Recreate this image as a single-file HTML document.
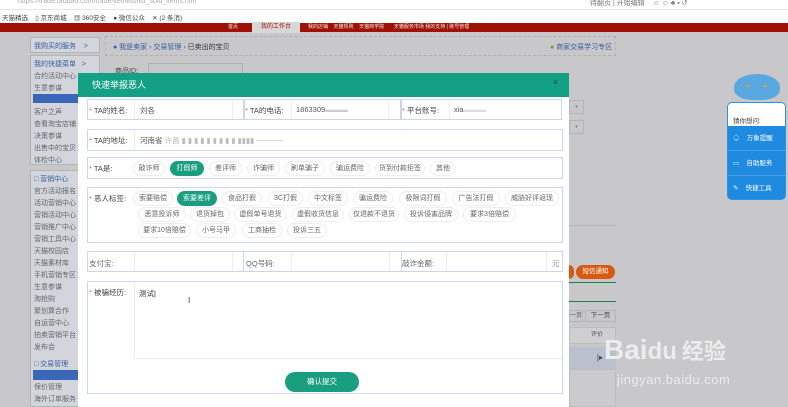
<!DOCTYPE html>
<html><head><meta charset="utf-8"><style>
*{margin:0;padding:0;box-sizing:border-box}
body{width:788px;height:407px;overflow:hidden;position:relative;background:#c8c8ca;font-family:"Liberation Sans","Noto Sans CJK SC",sans-serif;font-size:7px;color:#555}
.a{position:absolute}
.pill{position:absolute;height:15px;border:1px solid #eee;border-radius:8px;background:#fff;font-size:7px;color:#666;text-align:center;line-height:13px}
.pill.on{background:#1a9e80;color:#fff;border-color:#1a9e80}
.box{position:absolute;border:1px solid #c9d6ee;background:#fff}
.lbl{position:absolute;font-size:7.5px;color:#444}
.lbl b{color:#e55;font-weight:normal}
.sb{position:absolute;left:34px;font-size:7px;color:#666}
</style></head><body>
<div class="a" style="left:0;top:0;width:788px;height:23px;background:#fff"></div>
<div class="a" style="left:18px;top:-2px;font-size:7px;color:#aaa">https://trade.taobao.com/trade/itemlist/list_sold_items.htm</div>
<div class="a" style="left:0;top:9px;width:788px;height:1px;background:#e5e5e5"></div>
<div class="a" style="left:2px;top:12px;font-size:6.5px;color:#444">天猫精选 &nbsp;&nbsp; ▯ 京东商城 &nbsp;&nbsp; ▦ 360安全 &nbsp;&nbsp; ● 微信公众 &nbsp;&nbsp; ✕ (2 条消)</div>
<div class="a" style="left:590px;top:-2px;font-size:7px;color:#777">待翻页 | 开始编辑 &nbsp;&nbsp; ☺ ☺ ♣ ▪ ↺</div>
<div class="a" style="left:0;top:23px;width:788px;height:9px;background:#a11004"></div>
<div class="a" style="left:252px;top:22px;width:48px;height:11px;background:#d8d8d8;font-size:6px;text-align:center;line-height:11px;color:#a11004">我的工作台</div>
<div class="a" style="left:228px;top:23px;font-size:5px;color:#eee;line-height:9px">首页</div>
<div class="a" style="left:308px;top:23px;font-size:5px;color:#eee;line-height:9px">我的店铺 &nbsp;&nbsp; 天猫规则 &nbsp;&nbsp; 天猫商学院 &nbsp;&nbsp;&nbsp;&nbsp;&nbsp; 天猫服务市场   我的支持 | 账号管理</div>
<div class="a" style="left:30px;top:37px;width:70px;height:16px;background:#d2d5dc;border:1px solid #b5b5b5"></div>
<div class="sb" style="top:41px;color:#3a5ea0">我购买的服务 &nbsp;&nbsp; &gt;</div>
<div class="a" style="left:30px;top:55px;width:70px;height:110px;background:#d2d5dc;border:1px solid #b5b5b5"></div>
<div class="sb" style="top:59px;color:#3a5ea0">我的快捷菜单 &nbsp; &gt;</div>
<div class="sb" style="top:71px">合约活动中心</div>
<div class="sb" style="top:83px">生意参谋</div>
<div class="a" style="left:33px;top:94px;width:45px;height:9px;background:#3a68b8"></div>
<div class="sb" style="top:107px">客户之声</div>
<div class="sb" style="top:119px">查看淘宝店铺</div>
<div class="sb" style="top:131px">决策参谋</div>
<div class="sb" style="top:143px">出售中的宝贝</div>
<div class="sb" style="top:155px">体检中心</div>
<div class="a" style="left:30px;top:170px;width:70px;height:237px;background:#d2d5dc;border:1px solid #b5b5b5"></div>
<div class="sb" style="top:174px;color:#3a5ea0">□ 营销中心</div>
<div class="sb" style="top:186px">官方活动报名</div>
<div class="sb" style="top:198px">活动营销中心</div>
<div class="sb" style="top:210px">营销活动中心</div>
<div class="sb" style="top:222px">营销推广中心</div>
<div class="sb" style="top:234px">营销工具中心</div>
<div class="sb" style="top:246px">天猫校园店</div>
<div class="sb" style="top:258px">天猫素材库</div>
<div class="sb" style="top:270px">手机营销专区</div>
<div class="sb" style="top:282px">生意参谋</div>
<div class="sb" style="top:294px">淘抢购</div>
<div class="sb" style="top:306px">聚划算合作</div>
<div class="sb" style="top:318px">自运营中心</div>
<div class="sb" style="top:330px">拍卖营销平台</div>
<div class="sb" style="top:342px">发布会</div>
<div class="sb" style="top:359px;color:#3a5ea0">□ 交易管理</div>
<div class="a" style="left:33px;top:370px;width:45px;height:10px;background:#3a68b8"></div>
<div class="sb" style="top:382px">保价管理</div>
<div class="sb" style="top:394px">海外订单服务</div>
<div class="a" style="left:105px;top:36px;width:511px;height:20px;border:1px dashed #b0b0b0"></div>
<div class="a" style="left:113px;top:42px;font-size:7px;color:#3a5ea0">● 我是卖家 › 交易管理 › <span style="color:#333">已卖出的宝贝</span></div>
<div class="a" style="left:550px;top:42px;font-size:7px;color:#3a5ea0"><span style="color:#7a9a20">●</span> 商家交易学习专区</div>
<div class="a" style="left:115px;top:66px;font-size:7px;color:#444">商品ID:</div>
<div class="a" style="left:148px;top:63px;width:95px;height:12px;border:1px solid #b0b0b0"></div>
<div class="a" style="left:569px;top:100px;width:15px;height:14px;border:1px solid #b5b5b5;font-size:5px;color:#777;text-align:center;line-height:12px">▾</div>
<div class="a" style="left:569px;top:120px;width:15px;height:14px;border:1px solid #b5b5b5;font-size:5px;color:#777;text-align:center;line-height:12px">▾</div>
<div class="a" style="left:569px;top:225px;width:47px;height:1px;background:#b5b5b5"></div>
<div class="a" style="left:569px;top:265px;width:5px;height:14px;background:#d85a10;border-radius:0 7px 7px 0"></div>
<div class="a" style="left:576px;top:265px;width:39px;height:14px;background:#d85a10;border-radius:7px;color:#fff;font-size:6.5px;text-align:center;line-height:14px">短信通知</div>
<div class="a" style="left:569px;top:282px;width:47px;height:1px;background:#1a7a50"></div>
<div class="a" style="left:569px;top:301px;width:47px;height:1px;background:#1a7a50"></div>
<div class="a" style="left:569px;top:310px;width:14px;height:12px;border:1px solid #b5b5b5;font-size:6px;line-height:10px">一页</div>
<div class="a" style="left:585px;top:310px;width:31px;height:12px;border:1px solid #b5b5b5;font-size:6.5px;text-align:center;line-height:10px;color:#444">下一页</div>
<div class="a" style="left:569px;top:327px;width:47px;height:17px;background:#cfcfd1;border:1px solid #bdbdbd;font-size:6px;line-height:15px;text-align:right;padding-right:12px">评价</div>
<div class="a" style="left:569px;top:347px;width:47px;height:22px;background:#b8c1cd;font-size:8px;line-height:22px;text-align:right;padding-right:13px;color:#444">|▸</div>
<div class="a" style="left:569px;top:369px;width:47px;height:38px;background:#cbcbcd;border:1px solid #bdbdbd"></div>
<div class="a" style="left:734px;top:74px;width:46px;height:26px;background:#5aa8e0;border-radius:50% 50% 40% 40%"></div>
<div class="a" style="left:746px;top:85px;width:3px;height:2px;background:#e0a020"></div>
<div class="a" style="left:764px;top:85px;width:3px;height:2px;background:#e0a020"></div>
<div class="a" style="left:727px;top:102px;width:59px;height:98px;background:#1e8be0;border-radius:5px;border:1px solid #2d93e0"></div>
<div class="a" style="left:728px;top:103px;width:57px;height:23px;background:#fff;border-radius:4px 4px 0 0;font-size:6.5px;color:#444;padding:12px 0 0 5px">猜你想问:</div>
<div class="a" style="left:733px;top:132px;font-size:6.5px;color:#fff">♤ &nbsp;&nbsp; 万象提醒</div>
<div class="a" style="left:728px;top:150px;width:57px;height:1px;background:#4aa0e8"></div>
<div class="a" style="left:733px;top:157px;font-size:6.5px;color:#fff">▭ &nbsp;&nbsp; 自助服务</div>
<div class="a" style="left:728px;top:175px;width:57px;height:1px;background:#4aa0e8"></div>
<div class="a" style="left:733px;top:182px;font-size:6.5px;color:#fff">✎ &nbsp;&nbsp; 快捷工具</div>
<div class="a" style="left:604px;top:335px;font-size:28px;font-weight:bold;color:#ececec;line-height:30px;white-space:nowrap">Bai<span style="font-size:24px">du</span><span style="font-size:22px;font-family:'Noto Sans CJK SC',sans-serif"> 经验</span></div>
<div class="a" style="left:617px;top:372px;font-size:13px;color:#ececec;letter-spacing:0.5px">jingyan.baidu.com</div>
<div class="a" style="left:78px;top:73px;width:491px;height:334px;background:#fff"></div>
<div class="a" style="left:78px;top:73px;width:491px;height:24px;background:#14a085"></div>
<div class="a" style="left:92px;top:78px;font-size:9px;color:#fff">快速举报恶人</div>
<div class="a" style="left:553px;top:77px;font-size:9px;color:#1a4a40">×</div>
<div class="box" style="left:87px;top:99px;width:475px;height:21px"></div>
<div class="a" style="left:243px;top:100px;width:2px;height:19px;background:#c9d6ee"></div>
<div class="a" style="left:400px;top:100px;width:2px;height:19px;background:#c9d6ee"></div>
<div class="a" style="left:134px;top:100px;width:99px;height:19px;border-left:1px solid #eee;border-right:1px solid #eee"></div>
<div class="a" style="left:291px;top:100px;width:98px;height:19px;border-left:1px solid #eee;border-right:1px solid #eee"></div>
<div class="a" style="left:449px;top:100px;width:1px;height:19px;background:#eee"></div>
<div class="lbl" style="left:89px;top:105px"><b>*</b> TA的姓名:</div>
<div class="lbl" style="left:140px;top:105px;color:#555">刘各</div>
<div class="lbl" style="left:245px;top:105px"><b>*</b> TA的电话:</div>
<div class="lbl" style="left:296px;top:105px;color:#555">1863309<span style="color:#ccc">▬▬▬</span></div>
<div class="lbl" style="left:402px;top:105px"><b>*</b> 平台账号:</div>
<div class="lbl" style="left:454px;top:105px;color:#555">xia<span style="color:#ddd">▬▬▬</span></div>
<div class="box" style="left:87px;top:129px;width:476px;height:22px"></div>
<div class="a" style="left:134px;top:130px;width:1px;height:20px;background:#eee"></div>
<div class="lbl" style="left:89px;top:135px"><b>*</b> TA的地址:</div>
<div class="lbl" style="left:140px;top:135px;color:#555">河南省 <span style="color:#bbb">许昌 ▮ ▮ ▮ ▮ ▮ ▮ ▮ ▮ ▮ ▮▮▮▮ ─────</span></div>
<div class="box" style="left:87px;top:157px;width:476px;height:22px"></div>
<div class="lbl" style="left:89px;top:163px"><b>*</b> TA是:</div>
<div class="pill" style="left:133px;top:161px;width:32px">敲诈师</div>
<div class="pill on" style="left:170px;top:161px;width:34px">打假师</div>
<div class="pill" style="left:209px;top:161px;width:33px">差评师</div>
<div class="pill" style="left:247px;top:161px;width:33px">诈骗师</div>
<div class="pill" style="left:285px;top:161px;width:40px">刷单骗子</div>
<div class="pill" style="left:330px;top:161px;width:40px">骗运费险</div>
<div class="pill" style="left:375px;top:161px;width:50px">货到付款拒签</div>
<div class="pill" style="left:430px;top:161px;width:26px">其他</div>
<div class="box" style="left:87px;top:187px;width:476px;height:56px"></div>
<div class="lbl" style="left:89px;top:193px"><b>*</b> 恶人标签:</div>
<div class="pill" style="left:133px;top:191px;width:40px">索要赔偿</div>
<div class="pill on" style="left:177px;top:191px;width:40px">索要差评</div>
<div class="pill" style="left:222px;top:191px;width:40px">食品打假</div>
<div class="pill" style="left:268px;top:191px;width:35px">3C打假</div>
<div class="pill" style="left:308px;top:191px;width:40px">中文标签</div>
<div class="pill" style="left:353px;top:191px;width:40px">骗运费险</div>
<div class="pill" style="left:399px;top:191px;width:48px">极限词打假</div>
<div class="pill" style="left:452px;top:191px;width:48px">广告法打假</div>
<div class="pill" style="left:505px;top:191px;width:54px">威胁好评返现</div>
<div class="pill" style="left:138px;top:207px;width:48px">恶意投诉师</div>
<div class="pill" style="left:190px;top:207px;width:40px">退货掉包</div>
<div class="pill" style="left:234px;top:207px;width:53px">虚假单号退货</div>
<div class="pill" style="left:292px;top:207px;width:52px">虚假收货信息</div>
<div class="pill" style="left:349px;top:207px;width:50px">仅退款不退货</div>
<div class="pill" style="left:404px;top:207px;width:54px">投诉侵害品牌</div>
<div class="pill" style="left:463px;top:207px;width:53px">要求3倍赔偿</div>
<div class="pill" style="left:138px;top:223px;width:53px">要求10倍赔偿</div>
<div class="pill" style="left:196px;top:223px;width:40px">小号马甲</div>
<div class="pill" style="left:242px;top:223px;width:40px">工商抽检</div>
<div class="pill" style="left:287px;top:223px;width:40px">投诉三五</div>
<div class="box" style="left:87px;top:251px;width:476px;height:21px"></div>
<div class="a" style="left:134px;top:252px;width:1px;height:19px;background:#eee"></div>
<div class="a" style="left:232px;top:252px;width:1px;height:19px;background:#eee"></div>
<div class="a" style="left:243px;top:252px;width:1px;height:19px;background:#c9d6ee"></div>
<div class="a" style="left:291px;top:252px;width:1px;height:19px;background:#eee"></div>
<div class="a" style="left:389px;top:252px;width:1px;height:19px;background:#eee"></div>
<div class="a" style="left:401px;top:252px;width:1px;height:19px;background:#c9d6ee"></div>
<div class="a" style="left:446px;top:252px;width:1px;height:19px;background:#eee"></div>
<div class="a" style="left:546px;top:252px;width:1px;height:19px;background:#eee"></div>
<div class="lbl" style="left:89px;top:258px;color:#666">支付宝:</div>
<div class="lbl" style="left:246px;top:258px;color:#666">QQ号码:</div>
<div class="lbl" style="left:402px;top:258px;color:#666">敲诈金额:</div>
<div class="lbl" style="left:552px;top:258px;color:#888">元</div>
<div class="box" style="left:87px;top:281px;width:476px;height:113px"></div>
<div class="a" style="left:134px;top:282px;width:428px;height:77px;border-left:1px solid #eee;border-bottom:1px solid #eee"></div>
<div class="lbl" style="left:89px;top:287px"><b>*</b> 被骗经历:</div>
<div class="lbl" style="left:139px;top:288px;color:#333">测试|</div>
<div class="a" style="left:188px;top:296px;font-size:8px;color:#333">I</div>
<div class="a" style="left:285px;top:372px;width:74px;height:20px;background:#1a9e80;border-radius:10px;color:#fff;font-size:7.5px;text-align:center;line-height:20px">确认提交</div>
</body></html>
